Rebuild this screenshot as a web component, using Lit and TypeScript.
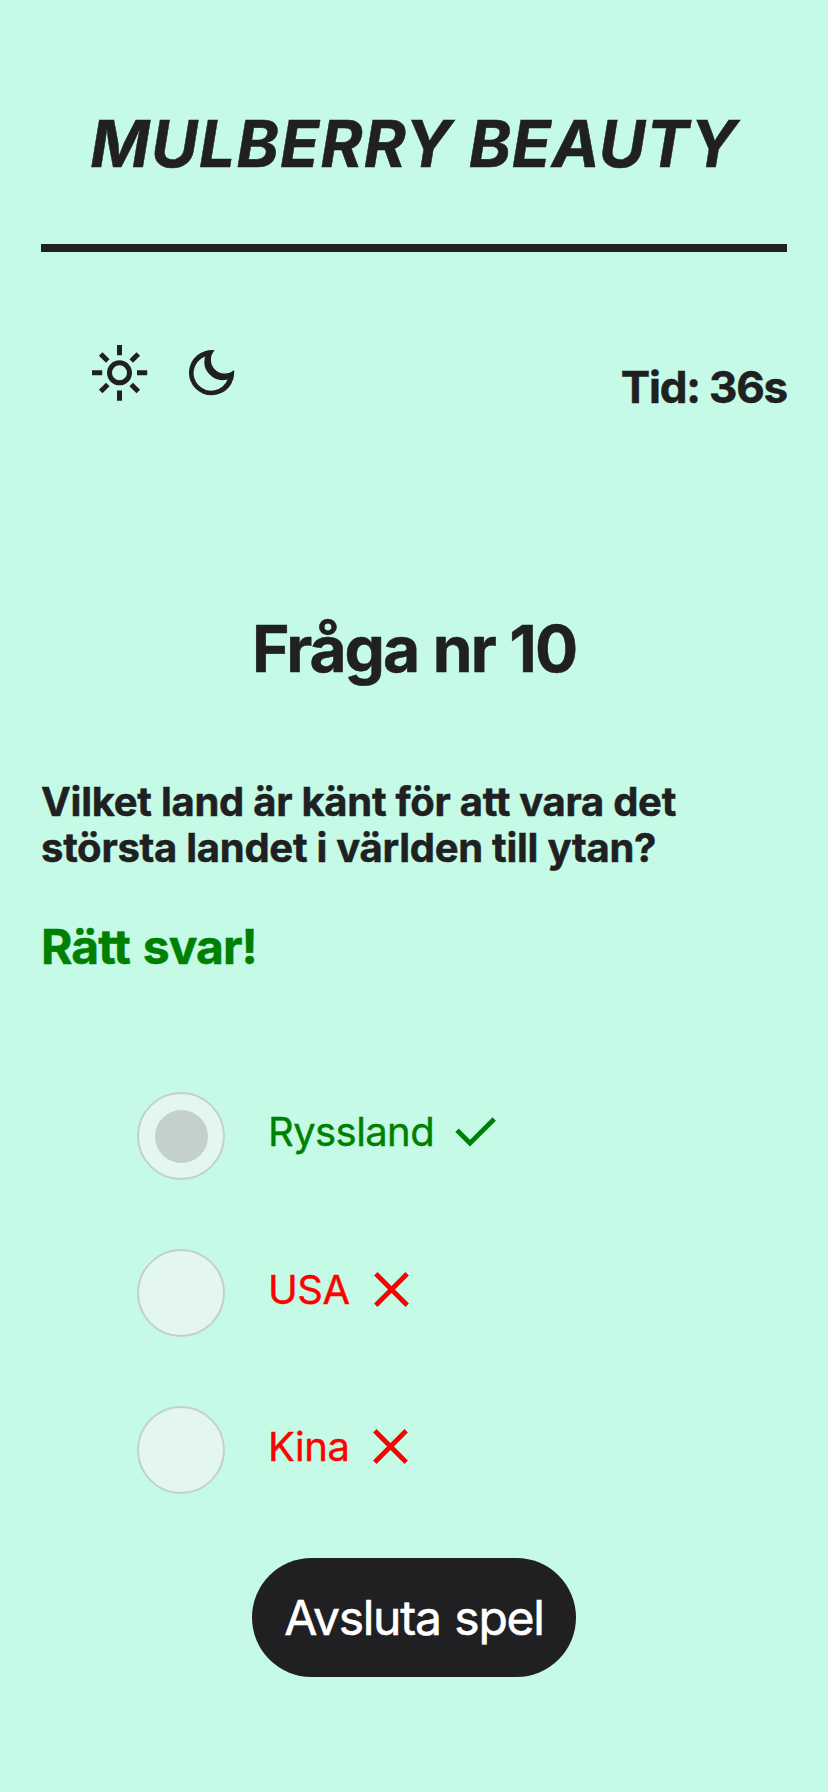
import { LitElement, html, css, svg } from "lit";
import { customElement, property, state } from "lit/decorators.js";
import { classMap } from "lit/directives/class-map.js";

interface Answer {
  text: string;
  correct: boolean;
}

@customElement("answer-row")
class AnswerRow extends LitElement {
  @property({ attribute: false }) answer!: Answer;
  @property({ type: Boolean }) selected = false;

  static styles = css`
    :host { display: flex; align-items: flex-start; height: 88px; }
    .radio {
      box-sizing: border-box; width: 88px; height: 88px; border-radius: 50%;
      border: 2px solid #c3d0cb; background: #e3f7f0;
      display: flex; align-items: center; justify-content: center;
    }
    .dot { width: 53px; height: 53px; border-radius: 50%; background: #c3d0cb; }
    .label {
      display: flex; align-items: center; height: 80px; margin-left: 43px;
      font-size: 40px; letter-spacing: -0.45px; color: red; white-space: nowrap;
      -webkit-text-stroke: 0.4px currentColor;
    }
    .label.correct { color: green; height: 78px; letter-spacing: -0.58px; }
    .mark { width: 44px; height: 44px; margin-left: 19px; display: block; }
  `;

  render() {
    const { text, correct } = this.answer;
    return html`
      <div class="radio">${this.selected ? html`<div class="dot"></div>` : ""}</div>
      <div class=${classMap({ label: true, correct })}>
        <span>${text}</span>
        <svg class="mark" viewBox="0 0 44 44" fill="none" stroke="currentColor" stroke-width="4.8">
          ${correct
            ? svg`<path d="M4 21.2 17 34.2 41.2 10" />`
            : svg`<path d="M6.8 6.8 38.2 38.2M38.2 6.8 6.8 38.2" />`}
        </svg>
      </div>
    `;
  }
}

@customElement("app-root")
class AppRoot extends LitElement {
  @state() seconds = 36;
  @state() selected = 0;
  answers: Answer[] = [
    { text: "Ryssland", correct: true },
    { text: "USA", correct: false },
    { text: "Kina", correct: false },
  ];

  static styles = css`
    :host {
      display: block; box-sizing: border-box; min-height: 1792px; padding: 0 41px;
      background: #c5fbe6; color: #201f22;
      font-family: Inter, "Liberation Sans", sans-serif;
      font-feature-settings: "liga" 1, "calt" 1;
      -webkit-text-stroke: 0.5px currentColor;
    }
    h1, h2, h3, p { margin: 0; }
    header { height: 252px; border-bottom: 8px solid #201f22; padding-top: 105px; box-sizing: border-box; }
    h1 { font-size: 64px; line-height: 78px; font-style: italic; font-weight: 700; letter-spacing: 0.65px; text-align: center; white-space: nowrap; }
    .wide { letter-spacing: 1.2px; }
    .bar { display: flex; justify-content: space-between; height: 242px; padding-top: 92px; }
    .themes { display: flex; gap: 36px; padding-left: 50px; }
    .themes svg { width: 57px; height: 57px; display: block; }
    .time { font-size: 44px; line-height: 54px; font-weight: 700; margin-top: 16px; letter-spacing: -1.2px; white-space: nowrap; }
    h2 { font-size: 64px; line-height: 78px; font-weight: 700; letter-spacing: -2px; word-spacing: 1.5px; text-align: center; margin-top: 24px; }
    .question { font-size: 40px; line-height: 46px; font-weight: 700; letter-spacing: -0.27px; margin-top: 91px; width: 700px; }
    .result { font-size: 48px; line-height: 58px; font-weight: 700; letter-spacing: -0.95px; word-spacing: 2.5px; color: green; margin-top: 47px; }
    .answers { display: flex; flex-direction: column; gap: 69px; margin: 116px 0 0 96px; }
    .end {
      display: block; box-sizing: border-box; width: 324px; height: 119px; margin: 64px auto 0; padding: 0;
      border: 0; border-radius: 60px; background: #201f22; color: #fff;
      font: 400 48px Inter, "Liberation Sans", sans-serif; letter-spacing: -1.25px; word-spacing: 1.5px; white-space: nowrap;
      -webkit-text-stroke: 0.6px currentColor;
    }
  `;

  render() {
    return html`
      <header><h1><span class="wide">MULBERRY</span> BEAUTY</h1></header>
      <div class="bar">
        <div class="themes">
          <svg viewBox="0 0 57 57" fill="none" stroke="#201f22" stroke-width="5">
            <circle cx="28.5" cy="28.8" r="10" />
            <path d="M28.5 1V11.2M28.5 46.5V56.7M1 28.8H11.2M46 28.8H56.2M9.7 10 16.8 17.1M47.3 10 40.2 17.1M9.7 47.6 16.8 40.5M47.3 47.6 40.2 40.5" />
          </svg>
          <svg viewBox="0 0 57 57" fill="#201f22" fill-rule="evenodd">
            <path d="M30.7 6.3A22.6 22.6 0 1 0 50 26A13.8 13.8 0 0 1 30.7 6.3ZM21.2 12.5A18.3 18.3 0 0 0 43.6 35.4A17.6 17.6 0 1 1 21.2 12.5Z" />
          </svg>
        </div>
        <div class="time">Tid: ${this.seconds}s</div>
      </div>
      <h2>Fråga nr 10</h2>
      <p class="question">Vilket land är känt för att vara det största landet i världen till ytan?</p>
      <p class="result">Rätt svar!</p>
      <div class="answers">
        ${this.answers.map((a, i) => html`<answer-row .answer=${a} .selected=${i === this.selected}></answer-row>`)}
      </div>
      <button class="end">Avsluta spel</button>
    `;
  }
}
